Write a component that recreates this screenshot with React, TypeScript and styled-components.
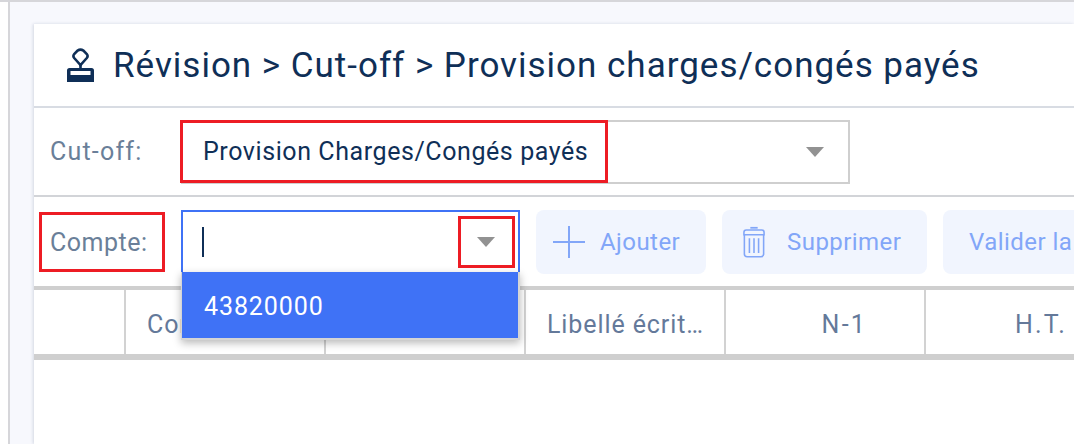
import { createGlobalStyle, styled } from 'styled-components'

const GlobalStyle = createGlobalStyle`
	html, body {
		margin: 0;
		padding: 0;
		width: 100%;
		height: 100%;
		overflow: hidden;
		background: #fff;
		font-family: Roboto, "Liberation Sans", sans-serif;
	}
	* {
		box-sizing: border-box;
	}
`

function StampIcon() {
	return (
		<svg width="27" height="34" viewBox="0 0 27 34">
			<path
				d="M10.6 2.6 Q13.5 0.6 16.4 2.6 L19.8 6 Q21.4 8 19.8 10 L13.5 17 L7.2 10 Q5.6 8 7.2 6 Z"
				fill="none"
				stroke="#0f2f57"
				strokeWidth="2.6"
			/>
			<path d="M13.5 16 V21" stroke="#0f2f57" strokeWidth="2.6" />
			<path
				d="M2.5 20 H24.5 Q27 20 27 22.5 V34 H0 V22.5 Q0 20 2.5 20 Z M3.5 23 V27 H23.5 V23 Z"
				fill="#0f2f57"
				fillRule="evenodd"
			/>
		</svg>
	)
}

function PlusIcon() {
	return (
		<svg width="32" height="32" viewBox="0 0 32 32">
			<path d="M16 0 V32 M0 16 H32" stroke="#82a6f8" strokeWidth="2" fill="none" />
		</svg>
	)
}

function TrashIcon() {
	return (
		<svg width="22" height="32" viewBox="0 0 24 34" fill="none" stroke="#82a6f8" strokeWidth="1.7">
			<path d="M8 1.5 H16" strokeWidth="1.9" />
			<path d="M1 9 V6.5 Q1 4 3.5 4 H20.5 Q23 4 23 6.5 V9 Z" />
			<path d="M1.5 9 V30 Q1.5 33 4.5 33 H19.5 Q22.5 33 22.5 30 V9" />
			<path d="M7 13 V29 M12 13 V29 M17 13 V29" />
		</svg>
	)
}

function App() {
	return (
		<>
			<GlobalStyle />
			<Page>
				<Strip />
				<Main>
					<Card>
						<Header>
							<StampIcon />
							<Title>Révision &gt; Cut-off &gt; Provision charges/congés payés</Title>
						</Header>
						<CutoffRow>
							<Label>Cut-off:</Label>
							<Select>
								<SelectValue>Provision Charges/Congés payés</SelectValue>
								<Caret />
								<ValueMark />
							</Select>
						</CutoffRow>
						<CompteRow>
							<CompteLabel>
								Compte:
								<LabelMark />
							</CompteLabel>
							<FocusedSelect>
								<Cursor />
								<Caret />
								<CaretMark />
								<Dropdown>
									<Option>43820000</Option>
								</Dropdown>
							</FocusedSelect>
							<Actions>
								<ActionButton $width={170} $gap={15} $pad={17}>
									<PlusIcon />
									Ajouter
								</ActionButton>
								<ActionButton $width={205} $gap={22} $pad={21}>
									<TrashIcon />
									Supprimer
								</ActionButton>
								<ActionButton $width={230} $gap={0} $pad={26}>
									Valider la saisie
								</ActionButton>
							</Actions>
						</CompteRow>
						<TableHead>
							<HeadCell $width={92} />
							<HeadCell $width={200}>Compte</HeadCell>
							<HeadCell $width={200} />
							<HeadCell $width={200}>Libellé écrit…</HeadCell>
							<HeadCell $width={200} $numeric>
								N-1
							</HeadCell>
							<HeadCell $width={200} $numeric>
								H.T.
							</HeadCell>
						</TableHead>
					</Card>
				</Main>
			</Page>
		</>
	)
}

export default App

const Page = styled.div`
	width: 1074px;
	height: 444px;
	display: flex;
	border-top: 2px solid #d6d6da;
	overflow: hidden;
`
const Strip = styled.div`
	width: 10px;
	flex: none;
	background: #fff;
	border-right: 2px solid #d6d6da;
`
const Main = styled.div`
	flex: 1;
	min-width: 0;
	background: #f7f8fd;
	padding: 22px 0 0 24px;
`
const Card = styled.div`
	height: 420px;
	background: #fff;
	box-shadow: -1px 0 3px rgba(30, 50, 90, 0.16);
`
const Header = styled.div`
	height: 84px;
	display: flex;
	align-items: center;
	gap: 19px;
	padding-left: 33px;
	border-bottom: 2px solid #d8dce3;
`
const Title = styled.div`
	font-size: 35px;
	color: #0f2f57;
	letter-spacing: 0.99px;
	white-space: nowrap;
`
const CutoffRow = styled.div`
	height: 89px;
	display: flex;
	align-items: center;
	padding-left: 16px;
	border-bottom: 2px solid #d2d4d8;
`
const CompteRow = styled.div`
	height: 89px;
	display: flex;
	align-items: flex-start;
	padding: 13px 0 0 16px;
`
const Label = styled.div`
	position: relative;
	width: 131px;
	flex: none;
	height: 62px;
	display: flex;
	align-items: center;
	font-size: 25px;
	letter-spacing: 1.2px;
	color: #6a7f99;
`
const CompteLabel = styled(Label)`
	padding-top: 3px;
	letter-spacing: 0.5px;
`
const Select = styled.div`
	position: relative;
	width: 669px;
	height: 64px;
	flex: none;
	display: flex;
	align-items: center;
	justify-content: space-between;
	padding: 0 24px 0 20px;
	border: 2px solid #cfcfcf;
`
const SelectValue = styled.div`
	font-size: 25px;
	letter-spacing: 0.58px;
	color: #0f2f57;
	white-space: nowrap;
`
const Caret = styled.div`
	width: 0;
	height: 0;
	border-left: 9px solid transparent;
	border-right: 9px solid transparent;
	border-top: 10px solid #929292;
`
const FocusedSelect = styled.div`
	position: relative;
	width: 339px;
	height: 62px;
	flex: none;
	display: flex;
	align-items: center;
	justify-content: space-between;
	padding: 0 23px 0 19px;
	border: 2px solid #3f72f6;
	border-bottom: none;
`
const Cursor = styled.div`
	width: 2px;
	height: 30px;
	background: #0f2f57;
`
const Dropdown = styled.div`
	position: absolute;
	left: -2px;
	right: -2px;
	top: 60px;
	height: 68px;
	background: #3f72f6;
	border-style: solid;
	border-color: #d5d5d5;
	border-width: 0 2px 2px 1px;
	box-shadow: 0 3px 8px rgba(0, 0, 0, 0.28);
	z-index: 2;
`
const Option = styled.div`
	height: 100%;
	display: flex;
	align-items: center;
	padding: 3px 0 0 22px;
	font-size: 25px;
	letter-spacing: 0.9px;
	color: #fff;
`
const Actions = styled.div`
	display: flex;
	gap: 16px;
	margin-left: 16px;
`
const ActionButton = styled.div<{ $width: number; $gap: number; $pad: number }>`
	width: ${(p) => p.$width}px;
	height: 64px;
	flex: none;
	display: flex;
	align-items: center;
	gap: ${(p) => p.$gap}px;
	padding-left: ${(p) => p.$pad}px;
	border-radius: 8px;
	background: #f1f5fe;
	font-size: 24px;
	letter-spacing: 0.45px;
	color: #82a6f8;
	white-space: nowrap;
`
const TableHead = styled.div`
	display: flex;
	height: 74px;
	border-top: 4px solid #cfcfcf;
	border-bottom: 6px solid #cfcfcf;
`
const HeadCell = styled.div<{ $width: number; $numeric?: boolean }>`
	width: ${(p) => p.$width}px;
	flex: none;
	display: flex;
	align-items: center;
	justify-content: ${(p) => (p.$numeric ? 'flex-end' : 'flex-start')};
	padding: ${(p) => (p.$numeric ? '4px 57px 0 0' : '4px 0 0 21px')};
	border-right: 2px solid #d2d2d2;
	font-size: 25px;
	letter-spacing: ${(p) => (p.$numeric ? '2.2px' : '0.9px')};
	color: #64799a;
	white-space: nowrap;
`
const RedMark = styled.div`
	position: absolute;
	border: 3px solid #ed1c24;
	pointer-events: none;
	z-index: 3;
`
const ValueMark = styled(RedMark)`
	left: -3px;
	top: -2px;
	width: 428px;
	height: 63px;
`
const LabelMark = styled(RedMark)`
	left: -11px;
	top: 2px;
	width: 126px;
	height: 60px;
`
const CaretMark = styled(RedMark)`
	right: 3px;
	top: 4px;
	width: 57px;
	height: 52px;
`
